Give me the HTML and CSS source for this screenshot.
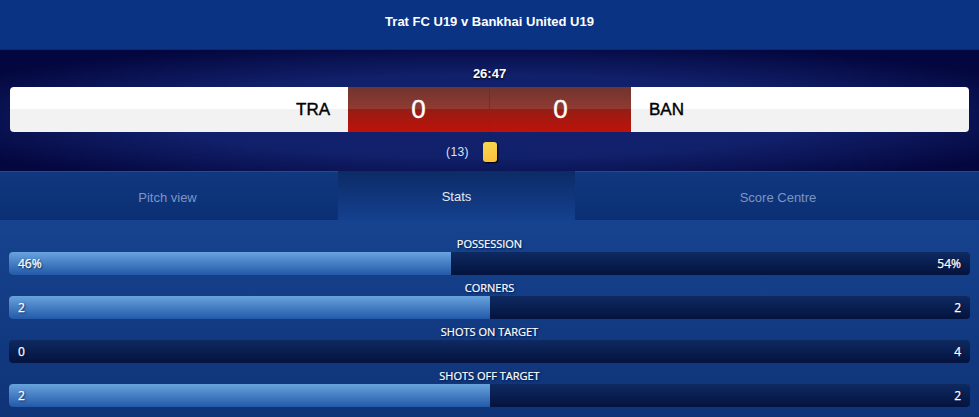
FILE: index.html
```html
<!DOCTYPE html>
<html>
<head>
    <meta charset="UTF-8">
    <title>Trat FC U19 v Bankhai United U19</title>
    <link rel="stylesheet" href="styles.css">
</head>
<body>
    <!-- Match title -->
    <div class="title">Trat FC U19 v Bankhai United U19</div>

    <!-- Scoreboard -->
    <div class="board">
        <div class="clock">26:47</div>
        <div class="score">
            <div class="team team-home">TRA</div>
            <div class="goals">
                <span class="goal goal-home">0</span>
                <span class="goal">0</span>
            </div>
            <div class="team team-away">BAN</div>
        </div>
        <div class="events">
            <span class="minute">(13)</span>
            <span class="card"></span>
        </div>
    </div>

    <!-- Tabs -->
    <div class="tabs">
        <div class="tab tab-left">Pitch view</div>
        <div class="tab tab-active">Stats</div>
        <div class="tab tab-right">Score Centre</div>
    </div>

    <!-- Stats -->
    <div class="stats">
        <div class="stat">
            <div class="stat-name">POSSESSION</div>
            <div class="bar">
                <div class="fill" style="width: 46%"></div>
                <span class="val">46%</span>
                <span class="val">54%</span>
            </div>
        </div>
        <div class="stat">
            <div class="stat-name">CORNERS</div>
            <div class="bar">
                <div class="fill" style="width: 50%"></div>
                <span class="val">2</span>
                <span class="val">2</span>
            </div>
        </div>
        <div class="stat">
            <div class="stat-name">SHOTS ON TARGET</div>
            <div class="bar">
                <span class="val">0</span>
                <span class="val">4</span>
            </div>
        </div>
        <div class="stat">
            <div class="stat-name">SHOTS OFF TARGET</div>
            <div class="bar">
                <div class="fill" style="width: 50%"></div>
                <span class="val">2</span>
                <span class="val">2</span>
            </div>
        </div>
    </div>
</body>
</html>
```

FILE: styles.css
```css
/* Page */
html, body {
    height: 100%;
}

body {
    margin: 0;
    overflow: hidden;
    background-color: #103579;
    color: #fff;
    font-family: "Liberation Sans", Arial, sans-serif;
}

/* Match title */
.title {
    height: 50px;
    padding-top: 14px;
    box-sizing: border-box;
    border-bottom: 1px solid #0b2a68;
    background-color: #0a3383;
    font-size: 13px;
    font-weight: bold;
    line-height: 15px;
    text-align: center;
}

/* Scoreboard */
.board {
    height: 121px;
    box-sizing: border-box;
    padding: 16px 10px 0;
    background: radial-gradient(ellipse 62% 62% at 50% 55%, #14226e 0%, #11206a 55%, #04073f 100%);
}

.clock {
    height: 21px;
    font-size: 13px;
    font-weight: bold;
    line-height: 15px;
    text-align: center;
    text-shadow: 0 1px 2px #000;
}

.score {
    display: flex;
    height: 45px;
}

.team {
    flex: 1;
    color: #000;
    font-size: 17px;
    line-height: 45px;
    -webkit-text-stroke: 0.4px #000;
    background: linear-gradient(#fff 0, #fff 22px, #f2f2f2 22px, #f2f2f2 100%);
}

.team-home {
    padding-right: 18px;
    border-radius: 4px 0 0 4px;
    text-align: right;
}

.team-away {
    padding-left: 18px;
    border-radius: 0 4px 4px 0;
}

.goals {
    display: flex;
    width: 283px;
    background: linear-gradient(#6f352c 0, #913a33 22px, #931d14 22px, #bf120a 100%);
}

.goal {
    flex: 1;
    font-size: 26px;
    line-height: 45px;
    text-align: center;
    -webkit-text-stroke: 0.4px #fff;
}

.goal-home {
    border-right: 1px solid #7a2a22;
}

.events {
    display: flex;
    align-items: center;
    justify-content: center;
    height: 39px;
    padding-right: 36px;
}

.minute {
    margin-right: 14px;
    color: #dfe3f2;
    font-size: 12px;
    letter-spacing: 0.4px;
}

.card {
    width: 14px;
    height: 20px;
    border-radius: 3px;
    background: linear-gradient(160deg, #f5d955, #fdbd3a);
    box-shadow: 1px 1px 2px #000;
}

/* Tabs */
.tabs {
    display: flex;
    height: 49px;
    font-size: 13px;
    line-height: 51px;
    text-align: center;
}

.tab {
    box-sizing: border-box;
    color: #7f95c3;
    border-top: 1px solid #234a96;
    background: linear-gradient(#103880, #0b2f74);
}

.tab-left {
    width: 338px;
    padding-right: 3px;
}

.tab-active {
    width: 237px;
    color: #e3e8f3;
    border-top: none;
    background: linear-gradient(#0c2b66, #15408f);
}

.tab-right {
    flex: 1;
    padding-left: 2px;
}

/* Stats */
.stats {
    height: 197px;
    box-sizing: border-box;
    padding: 17px 9px 0;
    background: linear-gradient(#16438f, #0f3377);
}

.stat {
    height: 44px;
}

.stat-name {
    height: 15px;
    font-family: "Open Sans", sans-serif;
    font-size: 11px;
    line-height: 13px;
    text-align: center;
    -webkit-text-stroke: 0.2px #fff;
    text-shadow: 1px 1px 2px #04123c;
}

.bar {
    position: relative;
    display: flex;
    justify-content: space-between;
    align-items: center;
    height: 23px;
    padding: 0 9px;
    border-radius: 4px;
    overflow: hidden;
    background: linear-gradient(#0e2a61, #04133f);
    font-family: "Open Sans", sans-serif;
    font-size: 12px;
    -webkit-text-stroke: 0.25px #fff;
    text-shadow: 1px 1px 2px #04123c;
}

.fill {
    position: absolute;
    top: 0;
    bottom: 0;
    left: 0;
    background: linear-gradient(#68a3dd, #2359a8);
}

.val {
    position: relative;
}
```
